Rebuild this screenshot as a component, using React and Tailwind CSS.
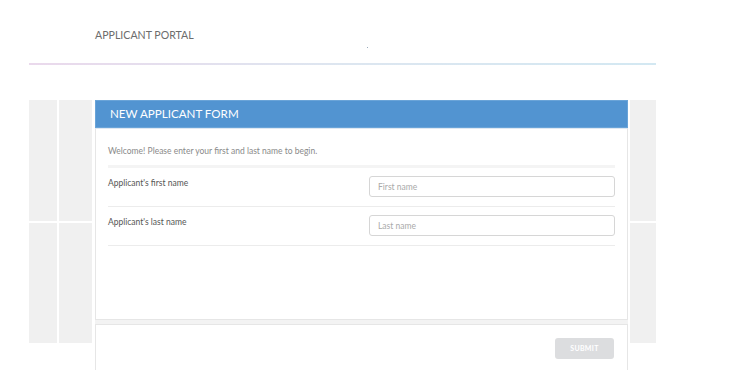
import React from 'react';

function GrayColumn({ width }) {
  return (
    <div className={`flex flex-col gap-[2px] ${width}`}>
      <div className="h-[121px] bg-[#f0f0f0]" />
      <div className="h-[120px] bg-[#f0f0f0]" />
    </div>
  );
}

function FieldRow({ label, placeholder }) {
  return (
    <div className="flex items-start justify-between h-[39px] pt-[8px] border-b border-[#ececec]">
      <p className="mt-[1px] text-[8.5px] leading-[12px] text-[#555]">{label}</p>
      <input
        type="text"
        placeholder={placeholder}
        className="w-[246px] h-[21px] px-2 border border-[#d6d6d6] rounded-[3px] text-[8.5px] text-[#555] placeholder:text-[#aaa] outline-none"
      />
    </div>
  );
}

export default function App() {
  return (
    <div className="w-[747px] h-[370px] bg-white overflow-hidden" style={{ fontFamily: 'Lato, "Open Sans", sans-serif' }}>
      {/* HEADER */}
      <div className="h-[63px] pl-[95px] pt-[28px] relative">
        <p className="text-[10.6px] text-[#6c6c6c]">APPLICANT PORTAL</p>
        <span className="absolute left-[367px] top-[47px] w-[1px] h-[1px] bg-[#9ab]" />
      </div>
      <div className="ml-[29px] w-[627px] h-[2px] bg-gradient-to-r from-[#ead9ec] via-[#dde6f0] to-[#d3e8f2]" />

      {/* MAIN */}
      <div className="flex ml-[29px] mt-[35px]">
        <GrayColumn width="w-[28px]" />
        <div className="ml-[2px]">
          <GrayColumn width="w-[33px]" />
        </div>

        {/* CARD */}
        <div className="ml-[3px] w-[533px] flex flex-col">
          <div className="h-[28px] bg-[#5294d1] border border-[#6aa4d8] flex items-center pl-[14px]">
            <p className="text-[11.6px] text-white">NEW APPLICANT FORM</p>
          </div>
          <div className="h-[192px] border border-[#e6e6e6] border-t-[#dfe8f2] pl-[12px] pr-[12px]">
            <p className="pt-[16px] text-[8.5px] leading-[12px] text-[#8a8a8a]">Welcome! Please enter your first and last name to begin.</p>
            <div className="mt-[8px] h-[3px] bg-[#f4f4f4]" />
            <FieldRow label="Applicant's first name" placeholder="First name" />
            <FieldRow label="Applicant's last name" placeholder="Last name" />
          </div>
          <div className="h-[4px] bg-[#f3f3f3]" />
          <div className="h-[60px] border border-[#e6e6e6] flex justify-end items-start pt-[13px] pr-[13px]">
            <button className="w-[59px] h-[21px] rounded-[3px] bg-[#dcdddf] text-white text-[7px] font-bold tracking-[0.3px]">
              SUBMIT
            </button>
          </div>
        </div>

        <div className="ml-[2px]">
          <GrayColumn width="w-[26px]" />
        </div>
      </div>
    </div>
  );
}
